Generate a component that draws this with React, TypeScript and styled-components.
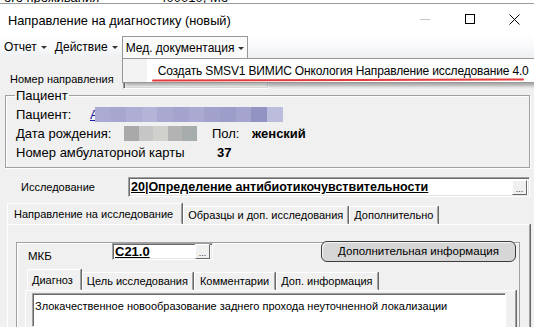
import React from 'react'
import styled, { createGlobalStyle } from 'styled-components'

const GlobalStyle = createGlobalStyle`
  html, body { margin: 0; padding: 0; }
  body {
    width: 534px;
    height: 327px;
    overflow: hidden;
    background: #f0f0f0;
    font-family: "Liberation Sans", Arial, sans-serif;
    color: #000;
  }
`

const BackStrip = styled.div`
  height: 3px;
  background: #fff;
  border-bottom: 1px solid #9a9a9a;
  overflow: hidden;
  display: flex;
  align-items: flex-end;
  gap: 60px;
  padding-left: 4px;
  font-size: 13px;
  line-height: 13px;
  white-space: nowrap;
`

const BackText = styled.span`
  margin-bottom: -1px;
`

const Window = styled.div`
  display: flex;
  flex-direction: column;
  height: 323px;
  overflow: hidden;
`

const TitleBar = styled.div`
  height: 30px;
  flex-shrink: 0;
  background: #fff;
  display: flex;
  align-items: center;
  padding-left: 8px;
  font-size: 12.8px;
`

const Title = styled.div`
  flex: 1;
  padding-top: 2px;
`

const Controls = styled.div`
  display: flex;
  height: 100%;
  margin-right: -3px;
`

const CtrlButton = styled.div`
  width: 45px;
  height: 100%;
  display: flex;
  align-items: center;
  justify-content: center;
`

const MenuBar = styled.div`
  height: 24px;
  flex-shrink: 0;
  display: flex;
  align-items: center;
  background: linear-gradient(#ffffff, #f7f8fa 60%, #eeeff2);
  font-size: 12px;
  position: relative;
  z-index: 5;
`

const MenuItem = styled.div<{ $open?: boolean }>`
  position: relative;
  display: flex;
  align-items: center;
  gap: 4px;
  height: 22px;
  padding: 0 3px 0 3px;
  box-sizing: border-box;
  border: 1px solid ${p => (p.$open ? '#979797' : 'transparent')};
  border-bottom: none;
  margin-top: ${p => (p.$open ? '2px' : '0')};
  background: ${p => (p.$open ? '#fafafa' : 'transparent')};
`

const Caret = styled.span`
  width: 0;
  height: 0;
  border-left: 3px solid transparent;
  border-right: 3px solid transparent;
  border-top: 3px solid #333;
  margin-top: 1px;
`

const Dropdown = styled.div`
  position: absolute;
  top: 100%;
  left: -1px;
  width: 440px;
  height: 25px;
  display: flex;
  background: #fff;
  border: 1px solid #979797;
  box-sizing: border-box;
  box-shadow: 3px 3px 3px rgba(0, 0, 0, 0.3);
`

const DropStrip = styled.div`
  width: 24px;
  flex-shrink: 0;
  background: #f3f3f3;
`

const DropItem = styled.div`
  position: relative;
  display: flex;
  align-items: center;
  padding-left: 11px;
  font-size: 12px;
  letter-spacing: -0.15px;
  white-space: nowrap;
`

const Scribble = styled.svg`
  position: absolute;
  left: 5px;
  top: 19px;
`

const Content = styled.div`
  flex: 1;
  min-height: 0;
  display: flex;
  flex-direction: column;
  padding: 11px 4px 0 5px;
`

const Row = styled.div<{ $pad?: number; $h?: number }>`
  display: flex;
  align-items: center;
  flex-shrink: 0;
  height: ${p => p.$h ?? 19}px;
  padding-left: ${p => p.$pad ?? 0}px;
`

const Label = styled.div<{ $w?: number; $size?: number }>`
  width: ${p => (p.$w ? `${p.$w}px` : 'auto')};
  flex-shrink: 0;
  font-size: ${p => p.$size ?? 13}px;
  white-space: nowrap;
`

const Field = styled.div<{ $w?: number }>`
  display: flex;
  align-items: center;
  justify-content: space-between;
  height: 20px;
  box-sizing: border-box;
  ${p => (p.$w ? `width: ${p.$w}px;` : 'flex: 1;')}
  background: #fff;
  border: 1px solid;
  border-color: #a0a0a0 #fff #fff #a0a0a0;
  box-shadow: inset 1px 1px 0 #696969, inset -1px -1px 0 #e3e3e3;
  padding: 0 2px 0 2px;
`

const FieldValue = styled.span<{ $size?: number }>`
  font-weight: bold;
  text-decoration: underline;
  font-size: ${p => p.$size ?? 12.5}px;
  white-space: nowrap;
`

const Ellipsis = styled.div`
  width: 15px;
  height: 15px;
  box-sizing: border-box;
  background: #f0f0f0;
  border: 1px solid;
  border-color: #fff #696969 #696969 #fff;
  font-size: 9px;
  line-height: 16px;
  text-align: center;
  color: #333;
`

const Group = styled.fieldset`
  margin: 0;
  flex-shrink: 0;
  padding: 0 0 5px 10px;
  border: 1px solid #a0a0a0;
  box-shadow: 1px 1px 0 #fff, inset 1px 1px 0 #fff;
  display: flex;
  flex-direction: column;
`

const Legend = styled.legend`
  padding: 0 1px;
  margin-left: -1px;
  font-size: 13px;
  line-height: 15px;
`

const GroupRows = styled.div`
  margin-top: 2px;
  display: flex;
  flex-direction: column;
`

const Bold = styled.span`
  font-weight: bold;
  font-size: 13px;
`

const Mosaic = styled.div<{ $w: number; $overlap?: number }>`
  display: flex;
  width: ${p => p.$w}px;
  height: 15px;
  margin-left: ${p => -(p.$overlap ?? 0)}px;
`

const Tile = styled.span`
  flex: 1;
`

const LinkLetter = styled.span`
  color: #1a1aa8;
  text-decoration: underline;
  font-size: 13px;
`

const TabStrip = styled.div<{ $ml: number }>`
  display: flex;
  flex-shrink: 0;
  align-items: flex-end;
  height: 21px;
  margin-left: ${p => p.$ml}px;
`

const Tab = styled.div<{ $active?: boolean }>`
  height: ${p => (p.$active ? 21 : 18)}px;
  box-sizing: border-box;
  display: flex;
  align-items: center;
  padding: ${p => (p.$active ? '0 8px 0 6px' : '0 4px 0 4px')};
  margin-right: 1px;
  border: 1px solid;
  border-color: #fff #a0a0a0 transparent #fff;
  box-shadow: 1px 0 0 #696969;
  font-size: 11px;
  white-space: nowrap;
  background: #f0f0f0;
`

const TabPanel = styled.div<{ $ml: number; $pad: string }>`
  flex: 1;
  min-height: 0;
  margin-left: ${p => p.$ml}px;
  border-top: 1px solid #fff;
  border-left: 1px solid #fff;
  border-right: 1px solid #a0a0a0;
  box-shadow: 1px 0 0 #696969;
  padding: ${p => p.$pad};
  display: flex;
  flex-direction: column;
`

const InnerBox = styled.div`
  flex: 1;
  min-height: 0;
  border: 1px solid #a0a0a0;
  border-bottom: none;
  box-shadow: inset 1px 1px 0 #fff;
  padding: 0 3px 0 8px;
  display: flex;
  flex-direction: column;
`

const MkbRow = styled.div`
  display: flex;
  flex-shrink: 0;
  align-items: flex-start;
  margin-top: -2px;
  height: 21px;
  padding-left: 3px;
`

const MkbLabel = styled.div`
  width: 84px;
  font-size: 11.5px;
  padding-top: 9px;
`

const MkbField = styled(Field)`
  margin-top: 2px;
  height: 17px;
`

const InfoButton = styled.div`
  margin-left: auto;
  width: 195px;
  height: 21px;
  box-sizing: border-box;
  border: 1px solid #3c3c3c;
  border-radius: 6px;
  background: #d6d6d6;
  box-shadow: inset 1px 1px 0 #f4f4f4;
  font-size: 11.5px;
  display: flex;
  justify-content: center;
  padding-top: 3px;
`

const TextArea = styled.div`
  flex: 1;
  background: #fff;
  border: 1px solid;
  border-color: #a0a0a0 #fff #fff #a0a0a0;
  box-shadow: inset 1px 1px 0 #696969;
  padding: 6px 2px;
  font-size: 11px;
`

const nameTiles = ['#aaaad2', '#a6a6cf', '#aeaed5', '#b4b4d8', '#a8a8d0', '#a3a3ce', '#a9a9d1', '#a1a1cc', '#9d9dca', '#a4a4ce', '#9393c3', '#bcbcdc']
const dateTiles = ['#a9a9a9', '#c6c6c6', '#d0d0cc', '#b3b3b3', '#a6abab']

const App = () => {
  return (
    <>
      <GlobalStyle />
      <BackStrip>
        <BackText>ого проживания</BackText>
        <BackText>400010, Мо</BackText>
      </BackStrip>
      <Window>
        <TitleBar>
          <Title>Направление на диагностику (новый)</Title>
          <Controls>
            <CtrlButton>
              <svg width="10" height="10" viewBox="0 0 10 10"><line x1="0" y1="5.5" x2="10" y2="5.5" stroke="#c4c4c4" /></svg>
            </CtrlButton>
            <CtrlButton>
              <svg width="10" height="10" viewBox="0 0 10 10"><rect x="0.5" y="0.5" width="9" height="9" fill="none" stroke="#000" /></svg>
            </CtrlButton>
            <CtrlButton>
              <svg width="11" height="11" viewBox="0 0 11 11"><path d="M0.5 0.5 L10.5 10.5 M10.5 0.5 L0.5 10.5" stroke="#000" /></svg>
            </CtrlButton>
          </Controls>
        </TitleBar>
        <MenuBar>
          <MenuItem>Отчет <Caret /></MenuItem>
          <MenuItem>Действие <Caret /></MenuItem>
          <MenuItem $open>
            Мед. документация <Caret />
            <Dropdown>
              <DropStrip />
              <DropItem>
                Создать SMSV1 ВИМИС Онкология Направление исследование 4.0
                <Scribble width="372" height="4" viewBox="0 0 372 4">
                  <path d="M1 2.4 C 120 2.2, 250 2.0, 371 1.4" stroke="#e33b3b" strokeWidth="2" fill="none" strokeLinecap="round" />
                </Scribble>
              </DropItem>
            </Dropdown>
          </MenuItem>
        </MenuBar>
        <Content>
          <Row $pad={5}>
            <Label $w={113} $size={11}>Номер направления</Label>
            <Field $w={146} />
          </Row>
          <Group>
            <Legend>Пациент</Legend>
            <GroupRows>
              <Row>
                <Label $w={74}>Пациент:</Label>
                <LinkLetter>А</LinkLetter>
                <Mosaic $w={188} $overlap={4}>
                  {nameTiles.map((c, i) => <Tile key={i} style={{ background: c }} />)}
                </Mosaic>
              </Row>
              <Row>
                <Label $w={108}>Дата рождения:</Label>
                <Mosaic $w={73}>
                  {dateTiles.map((c, i) => <Tile key={i} style={{ background: c }} />)}
                </Mosaic>
                <Label $w={40} style={{ marginLeft: 15 }}>Пол:</Label>
                <Bold>женский</Bold>
              </Row>
              <Row>
                <Label $w={201}>Номер амбулаторной карты</Label>
                <Bold>37</Bold>
              </Row>
            </GroupRows>
          </Group>
          <Row $h={20} $pad={16} style={{ marginTop: 9 }}>
            <Label $w={107} $size={11}>Исследование</Label>
            <Field>
              <FieldValue>20|Определение антибиотикочувствительности</FieldValue>
              <Ellipsis>...</Ellipsis>
            </Field>
          </Row>
          <TabStrip $ml={2} style={{ marginTop: 6 }}>
            <Tab $active>Направление на исследование</Tab>
            <Tab>Образцы и доп. исследования</Tab>
            <Tab>Дополнительно</Tab>
          </TabStrip>
          <TabPanel $ml={2} $pad="17px 9px 0 8px">
            <InnerBox>
              <MkbRow>
                <MkbLabel>МКБ</MkbLabel>
                <MkbField $w={101}>
                  <FieldValue $size={13}>C21.0</FieldValue>
                  <Ellipsis>...</Ellipsis>
                </MkbField>
                <InfoButton>Дополнительная информация</InfoButton>
              </MkbRow>
              <TabStrip $ml={2} style={{ marginTop: 7 }}>
                <Tab $active style={{ padding: '0 7px 0 4px' }}>Диагноз</Tab>
                <Tab>Цель исследования</Tab>
                <Tab style={{ padding: '0 5px' }}>Комментарии</Tab>
                <Tab>Доп. информация</Tab>
              </TabStrip>
              <TabPanel $ml={0} $pad="2px 9px 0 6px">
                <TextArea>Злокачественное новообразование заднего прохода неуточненной локализации</TextArea>
              </TabPanel>
            </InnerBox>
          </TabPanel>
        </Content>
      </Window>
    </>
  )
}

export default App
